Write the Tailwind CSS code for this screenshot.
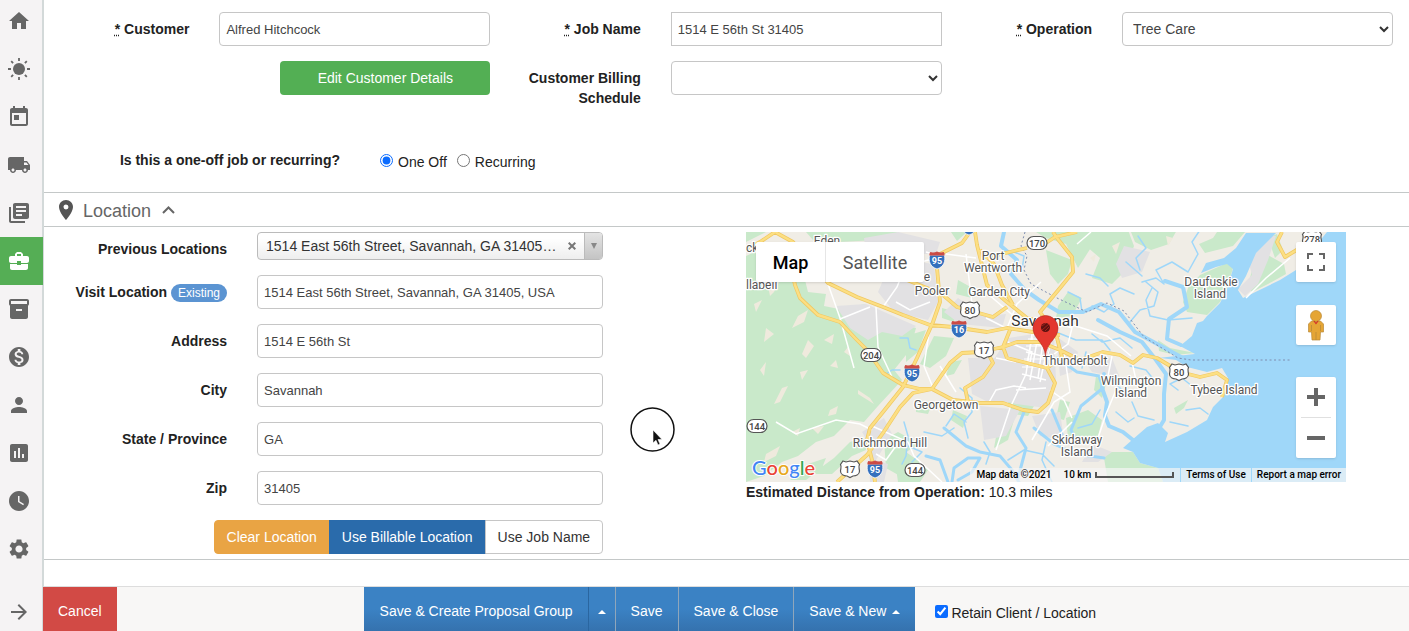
<!DOCTYPE html>
<html lang="en">
<head>
  <meta charset="UTF-8" />
  <meta name="viewport" content="width=device-width, initial-scale=1.0" />
  <title>Edit Job</title>
  <script src="https://cdn.jsdelivr.net/npm/@tailwindcss/browser@4"></script>
</head>
<body class="relative flex min-h-screen bg-white font-['Liberation_Sans',Arial,sans-serif] text-sm leading-5 text-[#222]">

  <!-- Sidebar -->
  <nav class="flex w-11 shrink-0 flex-col border-r-2 border-[#d3d9d9] bg-[#f5f3f4] text-[#666]">
    <div class="-mt-[3px] flex flex-col">
      <a href="#" aria-label="Home" class="flex h-12 items-center pl-[7px]"><svg class="size-6" viewBox="0 0 24 24" fill="currentColor"><path d="M10 20v-6h4v6h5v-8h3L12 3 2 12h3v8z"/></svg></a>
      <a href="#" aria-label="Today" class="flex h-12 items-center pl-[7px]"><svg class="size-6" viewBox="0 0 24 24" fill="currentColor"><circle cx="12" cy="12" r="6"/><path d="M12 1v3M12 20v3M1 12h3M20 12h3M4.2 4.2l1.9 1.9M17.9 17.9l1.9 1.9M4.2 19.8l1.9-1.9M17.9 6.1l1.9-1.9" stroke="currentColor" stroke-width="1.8"/></svg></a>
      <a href="#" aria-label="Calendar" class="flex h-12 items-center pl-[7px]"><svg class="size-6" viewBox="0 0 24 24" fill="currentColor"><path d="M19 3h-1V1h-2v2H8V1H6v2H5c-1.11 0-1.99.9-1.99 2L3 19c0 1.1.89 2 2 2h14c1.1 0 2-.9 2-2V5c0-1.1-.9-2-2-2zm0 16H5V8h14v11zM7 10h5v5H7z"/></svg></a>
      <a href="#" aria-label="Dispatch" class="flex h-12 items-center pl-[7px]"><svg class="size-6" viewBox="0 0 24 24" fill="currentColor"><path d="M20 8h-3V4H3c-1.1 0-2 .9-2 2v11h2c0 1.66 1.34 3 3 3s3-1.34 3-3h6c0 1.66 1.34 3 3 3s3-1.34 3-3h2v-5l-3-4zM6 18.5c-.83 0-1.5-.67-1.5-1.5s.67-1.5 1.5-1.5 1.5.67 1.5 1.5-.67 1.5-1.5 1.5zm13.5-9l1.96 2.5H17V9.5h2.5zm-1.5 9c-.83 0-1.5-.67-1.5-1.5s.67-1.5 1.5-1.5 1.5.67 1.5 1.5-.67 1.5-1.5 1.5z"/></svg></a>
      <a href="#" aria-label="Proposals" class="flex h-12 items-center pl-[7px]"><svg class="size-6" viewBox="0 0 24 24" fill="currentColor"><path d="M4 6H2v14c0 1.1.9 2 2 2h14v-2H4V6zm16-4H8c-1.1 0-2 .9-2 2v12c0 1.1.9 2 2 2h12c1.1 0 2-.9 2-2V4c0-1.1-.9-2-2-2zm-1 9H9V9h10v2zm-4 4H9v-2h6v2zm4-8H9V5h10v2z"/></svg></a>
      <a href="#" aria-label="Jobs" class="flex h-12 w-[43px] items-center bg-[#55ae55] pl-[7px] text-white"><svg class="size-6" viewBox="0 0 24 24" fill="currentColor"><path d="M10 16v-1H3.01L3 19c0 1.11.89 2 2 2h14c1.11 0 2-.89 2-2v-4h-7v1h-4zm10-9h-4.01V5l-2-2h-4l-2 2v2H4c-1.1 0-2 .9-2 2v3c0 1.11.89 2 2 2h6v-2h4v2h6c1.1 0 2-.9 2-2V9c0-1.1-.9-2-2-2zm-6 0h-4V5h4v2z"/></svg></a>
      <a href="#" aria-label="Inventory" class="flex h-12 items-center pl-[7px]"><svg class="size-6" viewBox="0 0 24 24" fill="currentColor"><path d="M20 2H4c-1 0-2 .9-2 2v3.01c0 .72.43 1.34 1 1.69V20c0 1.1 1.1 2 2 2h14c.9 0 2-.9 2-2V8.700c.57-.35 1-.97 1-1.690V4c0-1.100-1-2-2-2zm-5 12H9v-2h6v2zm5-7H4V4h16v3z"/></svg></a>
      <a href="#" aria-label="Billing" class="flex h-12 items-center pl-[7px]"><svg class="size-6" viewBox="0 0 24 24" fill="currentColor"><path d="M12 2C6.48 2 2 6.48 2 12s4.48 10 10 10 10-4.48 10-10S17.52 2 12 2zm1.41 16.09V20h-2.67v-1.93c-1.71-.36-3.16-1.46-3.27-3.4h1.96c.1 1.05.82 1.87 2.65 1.87 1.96 0 2.4-.98 2.4-1.59 0-.83-.44-1.61-2.67-2.14-2.48-.6-4.18-1.62-4.18-3.67 0-1.72 1.39-2.84 3.11-3.21V4h2.67v1.95c1.86.45 2.79 1.86 2.85 3.39H14.3c-.05-1.11-.64-1.87-2.22-1.87-1.5 0-2.4.68-2.4 1.64 0 .84.65 1.39 2.67 1.91s4.18 1.39 4.18 3.91c-.01 1.83-1.38 2.83-3.12 3.16z"/></svg></a>
      <a href="#" aria-label="Customers" class="flex h-12 items-center pl-[7px]"><svg class="size-6" viewBox="0 0 24 24" fill="currentColor"><path d="M12 12c2.21 0 4-1.79 4-4s-1.79-4-4-4-4 1.79-4 4 1.79 4 4 4zm0 2c-2.67 0-8 1.34-8 4v2h16v-2c0-2.66-5.33-4-8-4z"/></svg></a>
      <a href="#" aria-label="Reports" class="flex h-12 items-center pl-[7px]"><svg class="size-6" viewBox="0 0 24 24" fill="currentColor"><path d="M19 3H5c-1.1 0-2 .9-2 2v14c0 1.1.9 2 2 2h14c1.1 0 2-.9 2-2V5c0-1.1-.9-2-2-2zM9 17H7v-7h2v7zm4 0h-2V7h2v10zm4 0h-2v-4h2v4z"/></svg></a>
      <a href="#" aria-label="Time" class="flex h-12 items-center pl-[7px]"><svg class="size-6" viewBox="0 0 24 24" fill="currentColor"><path d="M12 2C6.5 2 2 6.5 2 12s4.5 10 10 10 10-4.5 10-10S17.5 2 12 2zm4.2 14.2L11 13V7h1.5v5.2l4.5 2.7-.8 1.3z"/></svg></a>
      <a href="#" aria-label="Settings" class="flex h-12 items-center pl-[7px]"><svg class="size-6" viewBox="0 0 24 24" fill="currentColor"><path d="M19.14 12.94c.04-.3.06-.61.06-.94 0-.32-.02-.64-.07-.94l2.03-1.58c.18-.14.23-.41.12-.61l-1.92-3.32c-.12-.22-.37-.29-.59-.22l-2.39.96c-.5-.38-1.03-.7-1.62-.94l-.36-2.54c-.04-.24-.24-.41-.48-.41h-3.84c-.24 0-.43.17-.47.41l-.36 2.54c-.59.24-1.13.57-1.62.94l-2.39-.96c-.22-.08-.47 0-.59.22L2.74 8.87c-.12.21-.08.47.12.61l2.03 1.58c-.05.3-.09.63-.09.94s.02.64.07.94l-2.03 1.58c-.18.14-.23.41-.12.61l1.92 3.32c.12.22.37.29.59.22l2.39-.96c.5.38 1.03.7 1.62.94l.36 2.54c.05.24.24.41.48.41h3.84c.24 0 .44-.17.47-.41l.36-2.54c.59-.24 1.13-.56 1.62-.94l2.39.96c.22.08.47 0 .59-.22l1.92-3.32c.12-.22.07-.47-.12-.61l-2.01-1.58zM12 15.6c-1.98 0-3.6-1.62-3.6-3.6s1.62-3.6 3.6-3.6 3.6 1.62 3.6 3.6-1.62 3.6-3.6 3.6z"/></svg></a>
    </div>
    <button type="button" aria-label="Expand menu" class="mt-auto mb-[7px] ml-[7px] size-6"><svg class="size-6" viewBox="0 0 24 24" fill="currentColor"><path d="M12 4l-1.41 1.41L16.17 11H4v2h12.17l-5.58 5.59L12 20l8-8z"/></svg></button>
  </nav>

  <form class="flex min-w-0 flex-1 flex-col">

    <!-- Job details -->
    <section class="border-b border-[#c4c8c8] pt-3 pr-px pb-[22px] pl-[10px]">
      <div class="grid grid-cols-3">
        <div class="flex flex-col gap-[15px]">
          <div class="grid grid-cols-[1fr_2fr]">
            <label for="customer" class="pt-[7px] pr-[15px] text-right font-bold"><abbr title="required">*</abbr> Customer</label>
            <div class="px-[15px]"><input id="customer" type="text" value="Alfred Hitchcock" class="h-[34px] w-full rounded border border-[#c6c6c6] px-[6px] text-[13px] text-[#444]" /></div>
          </div>
          <div class="flex justify-end pr-[15px]">
            <button type="button" class="h-[34px] w-[210px] rounded bg-[#53af54] text-white">Edit Customer Details</button>
          </div>
        </div>
        <div class="flex flex-col gap-[15px]">
          <div class="grid grid-cols-[1fr_2fr]">
            <label for="job-name" class="pt-[7px] pr-[15px] text-right font-bold"><abbr title="required">*</abbr> Job Name</label>
            <div class="px-[15px]"><input id="job-name" type="text" value="1514 E 56th St 31405" class="h-[34px] w-full border border-[#c6c6c6] px-[6px] text-[13px] text-[#444]" /></div>
          </div>
          <div class="grid grid-cols-[1fr_2fr]">
            <label for="billing" class="pt-[7px] pr-[15px] text-right font-bold">Customer Billing Schedule</label>
            <div class="px-[15px]">
              <div class="relative">
                <select id="billing" class="h-[34px] w-full appearance-none rounded border border-[#c6c6c6] bg-white px-[10px] text-sm"><option></option></select>
                <svg class="pointer-events-none absolute top-[13px] right-1 h-2 w-[10px]" viewBox="0 0 10 8" fill="none" stroke="#333" stroke-width="2"><path d="M1 2l4 4 4-4"/></svg>
              </div>
            </div>
          </div>
        </div>
        <div>
          <div class="grid grid-cols-[1fr_2fr]">
            <label for="operation" class="pt-[7px] pr-[15px] text-right font-bold"><abbr title="required">*</abbr> Operation</label>
            <div class="px-[15px]">
              <div class="relative">
                <select id="operation" class="h-[34px] w-full appearance-none rounded border border-[#c6c6c6] bg-white px-[10px] text-sm text-[#444]"><option>Tree Care</option></select>
                <svg class="pointer-events-none absolute top-[13px] right-1 h-2 w-[10px]" viewBox="0 0 10 8" fill="none" stroke="#333" stroke-width="2"><path d="M1 2l4 4 4-4"/></svg>
              </div>
            </div>
          </div>
        </div>
      </div>
      <div class="mt-[42px] flex h-5 items-start gap-10" role="radiogroup" aria-labelledby="job-type">
        <span id="job-type" class="w-[286px] text-right font-bold">Is this a one-off job or recurring?</span>
        <div class="flex gap-[10px]">
          <label class="flex gap-[5px] pt-[2px]"><input type="radio" name="job-type" checked class="mt-[2px] size-[13px] accent-[#0b6cff]" />One Off</label>
          <label class="flex gap-[5px] pt-[2px]"><input type="radio" name="job-type" class="mt-[2px] size-[13px]" />Recurring</label>
        </div>
      </div>
    </section>

    <!-- Location -->
    <h2 class="border-b border-[#c4c8c8] text-lg text-[#666]">
      <button type="button" class="flex h-[33px] items-center pt-[3px] pl-[10px]">
        <svg class="-mt-[2px] size-6 text-[#555]" viewBox="0 0 24 24" fill="currentColor"><path d="M12 2C8.13 2 5 5.13 5 9c0 5.25 7 13 7 13s7-7.75 7-13c0-3.87-3.13-7-7-7zm0 9.5a2.5 2.5 0 010-5 2.5 2.5 0 010 5z"/></svg>
        <span class="ml-[5px]">Location</span>
        <svg class="-mt-[2px] ml-[11px] h-2 w-[13px]" viewBox="0 0 13 8" fill="none" stroke="currentColor" stroke-width="2"><path d="M1 7l5.5-5.5L12 7"/></svg>
      </button>
    </h2>
    <section class="grid grid-cols-12 border-b border-[#c4c8c8] py-[5px] pr-px pl-[10px]">
      <div class="col-span-5 flex flex-col gap-[15px]">
        <div class="grid grid-cols-[1fr_2fr]">
          <label for="previous" class="pt-[7px] pr-[15px] text-right font-bold">Previous Locations</label>
          <div class="h-7 px-[15px]">
            <div class="relative">
              <select id="previous" class="h-7 w-full appearance-none truncate rounded border border-[#bbb] bg-linear-to-b from-white from-20% to-[#eee] pr-[42px] pl-2 text-sm text-[#333]"><option>1514 East 56th Street, Savannah, GA 31405, USA</option></select>
              <button type="button" aria-label="Clear previous location" class="absolute top-[10px] right-[27px]"><svg class="size-2" viewBox="0 0 8 8" stroke="#777" stroke-width="2"><path d="M.7.7l6.6 6.6M7.3.7L.7 7.3"/></svg></button>
              <span class="pointer-events-none absolute top-px right-px flex h-[26px] w-[18px] items-center justify-center rounded-r-[3px] border-l border-[#bbb] bg-linear-to-b from-[#e4e4e4] to-[#c4c4c4] text-[#888]"><svg class="h-[6px] w-2" viewBox="0 0 8 6" fill="currentColor"><path d="M1 0h6L4 6z"/></svg></span>
            </div>
          </div>
        </div>
        <div class="grid grid-cols-[1fr_2fr]">
          <label for="visit" class="pt-[7px] pr-[15px] text-right font-bold">Visit Location <span class="inline-block rounded-full bg-[#5b94d2] px-[7px] text-xs leading-[18px] font-normal text-white">Existing</span></label>
          <div class="px-[15px]"><input id="visit" type="text" value="1514 East 56th Street, Savannah, GA 31405, USA" class="h-[34px] w-full rounded border border-[#c6c6c6] px-[6px] text-[13px] text-[#444]" /></div>
        </div>
        <div class="grid grid-cols-[1fr_2fr]">
          <label for="address" class="pt-[7px] pr-[15px] text-right font-bold">Address</label>
          <div class="px-[15px]"><input id="address" type="text" value="1514 E 56th St" class="h-[34px] w-full rounded border border-[#c6c6c6] px-[6px] text-[13px] text-[#444]" /></div>
        </div>
        <div class="grid grid-cols-[1fr_2fr]">
          <label for="city" class="pt-[7px] pr-[15px] text-right font-bold">City</label>
          <div class="px-[15px]"><input id="city" type="text" value="Savannah" class="h-[34px] w-full rounded border border-[#c6c6c6] px-[6px] text-[13px] text-[#444]" /></div>
        </div>
        <div class="grid grid-cols-[1fr_2fr]">
          <label for="state" class="pt-[7px] pr-[15px] text-right font-bold">State / Province</label>
          <div class="px-[15px]"><input id="state" type="text" value="GA" class="h-[34px] w-full rounded border border-[#c6c6c6] px-[6px] text-[13px] text-[#444]" /></div>
        </div>
        <div class="grid grid-cols-[1fr_2fr]">
          <label for="zip" class="pt-[7px] pr-[15px] text-right font-bold">Zip</label>
          <div class="px-[15px]"><input id="zip" type="text" value="31405" class="h-[34px] w-full rounded border border-[#c6c6c6] px-[6px] text-[13px] text-[#444]" /></div>
        </div>
        <div class="flex h-[34px] justify-end pr-[15px]">
          <button type="button" class="rounded-l border border-[#e9a444] bg-[#e9a444] px-3 text-white">Clear Location</button>
          <button type="button" class="-ml-px border border-[#2a6bab] bg-[#2a6bab] px-3 text-white">Use Billable Location</button>
          <button type="button" class="-ml-px rounded-r border border-[#c6c6c6] px-3 text-[#333]">Use Job Name</button>
        </div>
      </div>

      <div class="col-span-6 col-start-7 px-[15px]">
        <div class="relative h-[250px] max-w-[600px] overflow-hidden bg-[#9fd7f9] font-[Roboto,sans-serif]">
          <svg class="block h-[250px] w-[600px]" viewBox="0 0 600 250" role="img" aria-label="Map of Savannah">
            <defs>
              <g id="interstate">
                <path d="M-7.5-5C-8.500 1-7.500 6.500 0 9 7.500 6.500 8.500 1 7.500-5z" fill="#3470bd" stroke="#fff" stroke-width=".8"/>
                <path d="M-7.5-4.500c-.3-1.500.2-2.500.8-3.500 2.200.8 4.700.5 6.700-.5 2 1 4.500 1.300 6.700.5.6 1 1.100 2 .8 3.500z" fill="#cb4b45"/>
              </g>
              <path id="us-shield" d="M-7-8l3 1 4-1 4 1 3-1 2.500 3.500C8-2 9.500 0 9.500 2 9.500 5.500 6 7 3 7L0 8.500-3 7C-6 7-9.500 5.500-9.500 2-9.500 0-8-2-9.500-4.500z" fill="#fff" stroke="#555" stroke-width="1.2"/>
              <rect id="state-oval" x="-10" y="-6.5" width="20" height="13" rx="6.5" fill="#fff" stroke="#555" stroke-width="1.2"/>
              <path id="roads-main" d="M224 0L216 11 194 22 191 36 194 70 187 90 171 126 157 155 137 180 124 196 121 208 126 228 129 250M14 10L29 0 47 10 82 51 111 65 137 75 157 83 184 93 207 95 241 100 261 96 287 100 314 103M0 18L14 10M44 30L49 53 54 66 72 83 94 90 109 106 121 118 137 141 157 153 174 157 186 157 207 168 234 171 257 171 277 178 292 180 302 171 309 151 301 136 281 131 261 126M91 250L121 223 137 201 154 175 167 161 186 157 204 131 216 121 234 120 257 115 264 98M242 121L247 131 237 145 219 156 222 170M257 115L271 110 294 110 314 118 334 128 357 120 374 123 387 131 397 123 411 126 421 132 434 140 454 145 471 141 481 148 476 165M257 115L261 126M301 136L316 125 311 106 301 90 294 80 314 56 327 40 326 25 311 6 307 0M294 15L309 5 331 0M229 0L231 13 241 53 261 70 281 86 301 90M281 16L251 23 234 26M234 18L248 32 256 53 267 73M161 48L181 56 197 63 211 75 247 85 261 75M536 0L531 10 539 25 554 16 565 8"/>
            </defs>
            <rect width="600" height="250" fill="#f0ede6"/>
            <!-- woodland -->
            <path fill="#c9e9ca" d="M0 24L22 14 34 22 52 20 62 60 80 62 78 74 98 78 118 72 142 88 170 96 164 118 148 138 156 148 132 174 118 190 104 188 88 204 70 210 52 224 36 230 18 244 0 250zM0 0h20L8 6 0 10zM60 0h90l-18 8-40 2-18 6zM110 5l40-5 22 6-28 8zM205 0h16l-10 9zM160 104l20-6-8 22-12 10zM188 104l20 2-8 18-16 12-10-4zM196 76l14 4-2 10-12-4zM212 48l18 10-4 8-16-4zM300 18l26 10-4 14-10 10-8-10zM290 0h60l-4 14-14 22-12-24-20-6zM350 0l32-2 6 16-10 26-12 12-20-6 8-20-14-12zM322 60l14 6-10 18-16 2 2-12zM385 0l46-2-8 14-18 6-16-8zM471 0h28l-12 14-28 7-6-9 14-6zM454 43l27-12 6 5-6 20-7 14-13 13-20-3-4-10 5-14zM506 38l14-16 18 10 2 10-18 10-16 8-4-6zM522 6l9-4 6 16-8 8zM412 108l12 8 25 5-20 2-16-4zM240 150l20 4 12-8 10 2-16 10-24 2zM207 178l14 6-4 12-12-8zM252 194l16-6-6 20-14 8zM262 170l12-4 14 8-6 10-16-2zM314 168l10 2-6 18-8-2zM320 186l22-8 14 10-4 16-14 8-16-6zM428 176l14-8-4 8-8 6zM357 220l30 0 7 11 18 5 5 14h-55zM138 208l14-8 22 12-14 8 14 10-20 14-14-8zM104 210l14-4 2 12-14 6-20 18H66l22-16zM150 236l22-6 10 8-8 12h-22zM62 232l18-6-4 10-16 12H44zM170 168l16 4-4 10-12-2zM350 144l10 8-4 14-8-8zM204 130l12-2-8 14-8 2zM136 102l12-2-8 14z"/>
            <!-- clearings -->
            <path fill="#efeadd" d="M22 54l12-6-6 12-4 4zM52 84l10-6-4 12-12 6zM20 96l8 6-10 8zM62 108l6 6-8 12-4-4zM36 156l6-2-8 16-6 2zM112 158l12 8 4 6-16-10zM84 178l8-4-2 8-8 2zM40 32l6 4-4 10-8-4zM108 88l10 4-8 6zM78 108l10-6-2 10zM8 72l8-4-6 12zM14 138l6-8-2 14zM54 140l8-2-6 10zM84 134l6-6 2 8zM420 4l7 2-5 8zM366 14l8-4-4 12zM344 26l6-4-2 8zM46 200l8-4-2 8zM98 120l4-5 2 9zM20 222l14-8-4 10-12 6zM66 196l12-2-6 8z"/>
            <!-- urban -->
            <path fill="#e2e1e3" d="M118 6l34-6 42 10-4 12-26 0-20 10-24-10zM160 28l28 4 4 38-10 18-34-8-16-20 6-14 22-10zM90 74l30-2 50 22-14 10-20-4-14 8-18-12zM212 66l26 18 22-2-4 14-42-4-16-12zM262 106l26-4 20 2 2 44-10 28-30-4-30-8 2-28zM222 126l38 0 30 14-12 30-36 0-16-8zM310 104l22 16-6 20-12 4zM378 14l26 6-8 20-20 6-6-14zM492 57l14-14-4-15 14-24 14 0-8 24-10 24-13 12zM116 200l22-14 8 16-16 26 12 4-4 18h-14l-2-40zM234 174l40 4-14 26-22 4zM286 184l28-4 4 28-24-4zM338 128l28-2 8 20-28-6zM346 212l20 8-14 10-16 0z"/>
            <!-- ocean -->
            <path fill="#9fd7f9" d="M581 0h19v250H417l-5-14-18-5-7-11-10-4 9-8 15-13 11-4 4 4 6 6-3 9 22-10 20-12 6-13 10-10 5-19-6-10-15 4-20-5-11-7-30-4 12 2 37-4-15-8 12-10 5-13 6-2 4-5 13-13 7-14 6-20-6-5-11 3-15 6 5-10 18-5 12-10 10-15h30l-20 20-10 23-8 14 5 8 37-18 16-10z"/>
            <g fill="none" stroke="#9fd7f9" stroke-linejoin="round" stroke-linecap="round">
              <path stroke-width="4" d="M258 0l-3 14 16 14-6 14 14 16 14 10 20 12 24 0 18-8 18 8 16 20 26 14 22 12"/>
              <path stroke-width="4" d="M352 88l22 12 22 10 14 18 10 14-2 20 0 26-6 10M358 142l-2 14 5 14-2 14 4 10 14 6 10 8M435 113l-14-6 2-20 18-12-4-20-18-6"/>
              <path stroke-width="3" d="M311 126l20 14 22 4 4 12-22 18-10 24 6 12M278 180l-8 20 10 16-8 30M198 196l22 18 14 6 20 4 12 14 8 14M180 224l14 4 8 22M206 250l2-14 14-10 12 0-8 14-14 8M288 196l20 16 22 10 28 4M316 202l-10-24"/>
              <path stroke-width="1.5" d="M396 50l14-4 8 6-8-14 16-8 16 10 10-18-6-12 8-12M400 50l12 10-4 14-14 4-10 12M446 86l-24 2-18-4-4-16 6-12M380 30l16 14M388 62l-14-6-10 6 4 10-10 8-12-6M340 42l14 4 8 8M322 60l12 6 2 14M392 4l8 12-10 10 4 12M346 102l10 8 18-4 12 10M310 100l20 8 26 0 8 10M158 190l4 14-2 20-4 8M162 214l14 6-10 10M140 142l6-4 8 0M220 190l-12-8-8 12M178 200l18 4 12-8M214 156l12 10 0 14-8 10 4 16M238 210l6 10-4 12M332 196l14-4 8-14M370 180l12 10 6-4M368 150l10 10 16 6M384 134l16 4 8 10M432 158l-8-6 12-6 10 8M440 178l14-2 8 6M424 190l18 4M386 170l6 14 16 4M262 228l16-10 18 4 12 12M300 210l-4 18 10 22M268 20l10 4-2 14M154 106l8 0 2 10 6 2M340 120l-4 16"/>
            </g>
            <path d="M279 0l-4 14 6 10-3 14 7 14 26 14 30 14 20-9 17 8 20 26 34 21 13 2h100" fill="none" stroke="#7e8db0" stroke-width="1" stroke-dasharray="2 2.5"/>
            <!-- minor roads -->
            <g fill="none" stroke="#fff" stroke-width="1.5">
              <path d="M82 52l12 34 14 50M130 75l2 40 14 30M137 75l14-20 8-20 4-14M160 34l30-8M200 22l30 4M180 20l14 4M150 70l14 8 20-8M94 87l30-12M30 190l20 12 40-14 24 4 12 6M126 194l36 16 6 14 28 26M130 222l10 6 10-14M184 94l-6 40 10 24M194 134l16 26M190 158l20 12-6 8M220 22l6 50M242 62l28 24M261 96l10-24 24-22M240 86l24 12M311 88l50 16 24 20M314 92l12 4-4 16-14 10M331 12l14-12M250 126l20 4M262 110l24 10-2 10-20-4M286 102l-6 40-16 34-14 42M292 104l-8 44M298 102l-6 44M304 104l-10 46M280 110l28 6M280 120l24 6M276 142l24 6M270 158l30-2M242 172l8-14 18-4 12 2M304 158l14 10 8 18M318 120l6 40-16 10-22 38M366 124l-4 20M326 190l-24 24M352 206l8-24 10-24M386 130l4 18M500 66l20-20 24-20"/>
              <path d="M283 100h28M282 107h30M280 114h30M278 127h26M276 135h25M288 100l-8 34M308 100l-8 30" stroke-width="1"/>
            </g>
            <use href="#roads-main" fill="none" stroke="#f0c862" stroke-width="3.8" stroke-linejoin="round"/>
            <use href="#roads-main" fill="none" stroke="#fcdf83" stroke-width="2.4" stroke-linejoin="round"/>
            <!-- route shields -->
            <g font-size="9" font-weight="700" fill="#fff" text-anchor="middle">
              <g transform="translate(223 -6)"><use href="#interstate"/></g>
              <g transform="translate(191 28)"><use href="#interstate"/><text y="4">95</text></g>
              <g transform="translate(213 97)"><use href="#interstate"/><text y="4">16</text></g>
              <g transform="translate(166 141)"><use href="#interstate"/><text y="4">95</text></g>
              <g transform="translate(129 237)"><use href="#interstate"/><text y="4">95</text></g>
            </g>
            <g font-size="9.5" font-weight="500" fill="#444" text-anchor="middle">
              <g transform="translate(224 78)"><use href="#us-shield"/><text y="4">80</text></g>
              <g transform="translate(238 118)"><use href="#us-shield"/><text y="4">17</text></g>
              <g transform="translate(433 140)"><use href="#us-shield"/><text y="4">80</text></g>
              <g transform="translate(104 237)"><use href="#us-shield"/><text y="4">17</text></g>
              <g transform="translate(566 7)"><use href="#us-shield"/><text y="4">278</text></g>
              <g transform="translate(291 11)"><use href="#state-oval"/><text y="3.5">170</text></g>
              <g transform="translate(125 123)"><use href="#state-oval"/><text y="3.5">204</text></g>
              <g transform="translate(11 194)"><use href="#state-oval"/><text y="3.5">144</text></g>
              <g transform="translate(169 238)"><use href="#state-oval"/><text y="3.5">144</text></g>
            </g>
            <!-- place names -->
            <g font-size="12" fill="#555" stroke="#fff" stroke-width="2.5" stroke-linejoin="round" paint-order="stroke" text-anchor="middle">
              <text x="81" y="13">Eden</text>
              <text x="0" y="20" text-anchor="start">ck</text>
              <text x="0" y="57" text-anchor="start">llabell</text>
              <text x="181" y="49">e</text>
              <text x="247" y="28">Port</text>
              <text x="247" y="40">Wentworth</text>
              <text x="186" y="63">Pooler</text>
              <text x="253" y="64">Garden City</text>
              <text x="465" y="54">Daufuskie</text>
              <text x="464" y="66">Island</text>
              <text x="329" y="133">Thunderbolt</text>
              <text x="200" y="177">Georgetown</text>
              <text x="144" y="215">Richmond Hill</text>
              <text x="385" y="153">Wilmington</text>
              <text x="385" y="165">Island</text>
              <text x="478" y="162">Tybee Island</text>
              <text x="331" y="212">Skidaway</text>
              <text x="331" y="224">Island</text>
              <text x="299" y="94" font-size="15.5" fill="#333">Savannah</text>
            </g>
            <path d="M299.5 124c-1-14-12.5-17-12.5-28a12.5 12.5 0 0125 0c0 11-11.5 14-12.5 28z" fill="#e3372e" stroke="#b3261e" stroke-width=".6"/>
            <circle cx="299.5" cy="95.5" r="4.5" fill="#5a1210"/>
            <path d="M296 94l4-3M296 98l7-6M299 99l4-4" stroke="#b3261e" stroke-width=".8"/>
            <text x="6" y="243" font-size="20" font-weight="500" font-family="Lato, sans-serif" stroke="#fff" stroke-width="2" paint-order="stroke"><tspan fill="#4285f4">G</tspan><tspan fill="#ea4335">o</tspan><tspan fill="#e8a820">o</tspan><tspan fill="#4285f4">g</tspan><tspan fill="#34a853">l</tspan><tspan fill="#ea4335">e</tspan></text>
          </svg>

          <div class="absolute top-[10px] left-[10px] flex h-10 rounded-xs bg-white text-lg text-[#565656] shadow">
            <button type="button" class="w-[70px] border-r border-[#e6e6e6] pt-[2px] font-medium text-black">Map</button>
            <button type="button" class="w-[98px] pt-[2px]">Satellite</button>
          </div>
          <button type="button" aria-label="Toggle fullscreen view" class="absolute top-[10px] right-[10px] flex size-10 items-center justify-center rounded-xs bg-white shadow">
            <svg class="size-[18px]" viewBox="0 0 18 18" fill="#666"><path d="M0 0v6h2V2h4V0H0zm16 0h-4v2h4v4h2V0h-2zm0 16h-4v2h6v-6h-2v4zM2 12H0v6h6v-2H2v-4z"/></svg>
          </button>
          <button type="button" aria-label="Street View" class="absolute top-[73px] right-[10px] flex size-10 items-center justify-center rounded-xs bg-white shadow">
            <svg class="h-8 w-[18px]" viewBox="0 0 18 32"><g fill="#e5a535" stroke="#b98a3a" stroke-width=".7"><path d="M4.5 12h9l3 3v8h-3l-.5 8H5l-.5-8h-3v-8z"/><circle cx="9" cy="7" r="5.5"/></g><path d="M9 23v8M4.5 16v6M13.5 16v6" stroke="#b98a3a" stroke-width=".8"/><path d="M7 12l2 2.500 2-2.500" fill="none" stroke="#d3302b" stroke-width="1.2"/></svg>
          </button>
          <div class="absolute top-[145px] right-[10px] flex w-10 flex-col items-center rounded-xs bg-white shadow">
            <button type="button" aria-label="Zoom in" class="flex size-10 items-center justify-center"><svg class="size-[18px]" viewBox="0 0 18 18" fill="#666"><path d="M7 0h4v7h7v4h-7v7H7v-7H0V7h7z"/></svg></button>
            <div class="h-px w-[30px] bg-[#e0e0e0]"></div>
            <button type="button" aria-label="Zoom out" class="flex size-10 items-center justify-center"><svg class="size-[18px]" viewBox="0 0 18 18" fill="#666"><path d="M0 7h18v4H0z"/></svg></button>
          </div>
          <div class="absolute right-0 bottom-0 flex h-[14px] text-[10px] leading-[14px] font-medium text-black">
            <span class="bg-[#f5f5f5]/70 px-[6px]">Map data ©2021</span>
            <span class="flex bg-[#f5f5f5]/70 px-[6px]">10 km<span class="mt-1 ml-1 h-[6px] w-[79px] border-2 border-t-0 border-[#555]"></span></span>
            <a href="#" class="border-l border-[#9fd7f9] bg-[#f5f5f5]/70 px-[5px]">Terms of Use</a>
            <a href="#" class="border-l border-[#9fd7f9] bg-[#f5f5f5]/70 px-[5px]">Report a map error</a>
          </div>
        </div>
        <p><strong>Estimated Distance from Operation:</strong> 10.3 miles</p>
      </div>
    </section>

    <!-- Actions -->
    <footer class="mt-auto flex h-[45px] border-t border-[#ddd] bg-[#f8f7f6]">
      <button type="button" class="-ml-px bg-[#d24a45] px-[15px] pt-1 text-white">Cancel</button>
      <div class="ml-[247px] flex bg-linear-to-b from-[#3b82c4] from-50% to-[#3572ae] text-white">
        <button type="button" class="border-r border-[#2a66a0] pr-[15px] pl-4 pt-1">Save &amp; Create Proposal Group</button>
        <button type="button" aria-label="More proposal options" class="border-r border-[#8fa6bb] px-[9px] pt-[6px]"><svg class="h-1 w-2" viewBox="0 0 8 4" fill="currentColor"><path d="M0 4l4-4 4 4z"/></svg></button>
        <button type="button" class="border-r border-[#8fa6bb] px-[15px] pt-1">Save</button>
        <button type="button" class="border-r border-[#8fa6bb] px-[15px] pt-1">Save &amp; Close</button>
        <button type="button" class="flex items-center gap-[6px] px-[15px] pt-1">Save &amp; New<svg class="mt-[2px] h-1 w-2" viewBox="0 0 8 4" fill="currentColor"><path d="M0 4l4-4 4 4z"/></svg></button>
      </div>
      <label class="ml-5 flex items-center gap-[3px] pt-2"><input type="checkbox" checked class="-mt-1 size-[13px] accent-[#0b6cff]" />Retain Client / Location</label>
    </footer>
  </form>

  <!-- Click indicator -->
  <svg class="pointer-events-none absolute top-[407px] left-[630px] size-[46px]" viewBox="0 0 46 46">
    <circle cx="22.5" cy="22.5" r="21.5" fill="none" stroke="#111" stroke-width="1.5"/>
    <path d="M23 23v13l3-2.7 2 4.7 2-.9-2-4.6h4z" fill="#111" stroke="#fff" stroke-width=".6"/>
  </svg>
</body>
</html>
